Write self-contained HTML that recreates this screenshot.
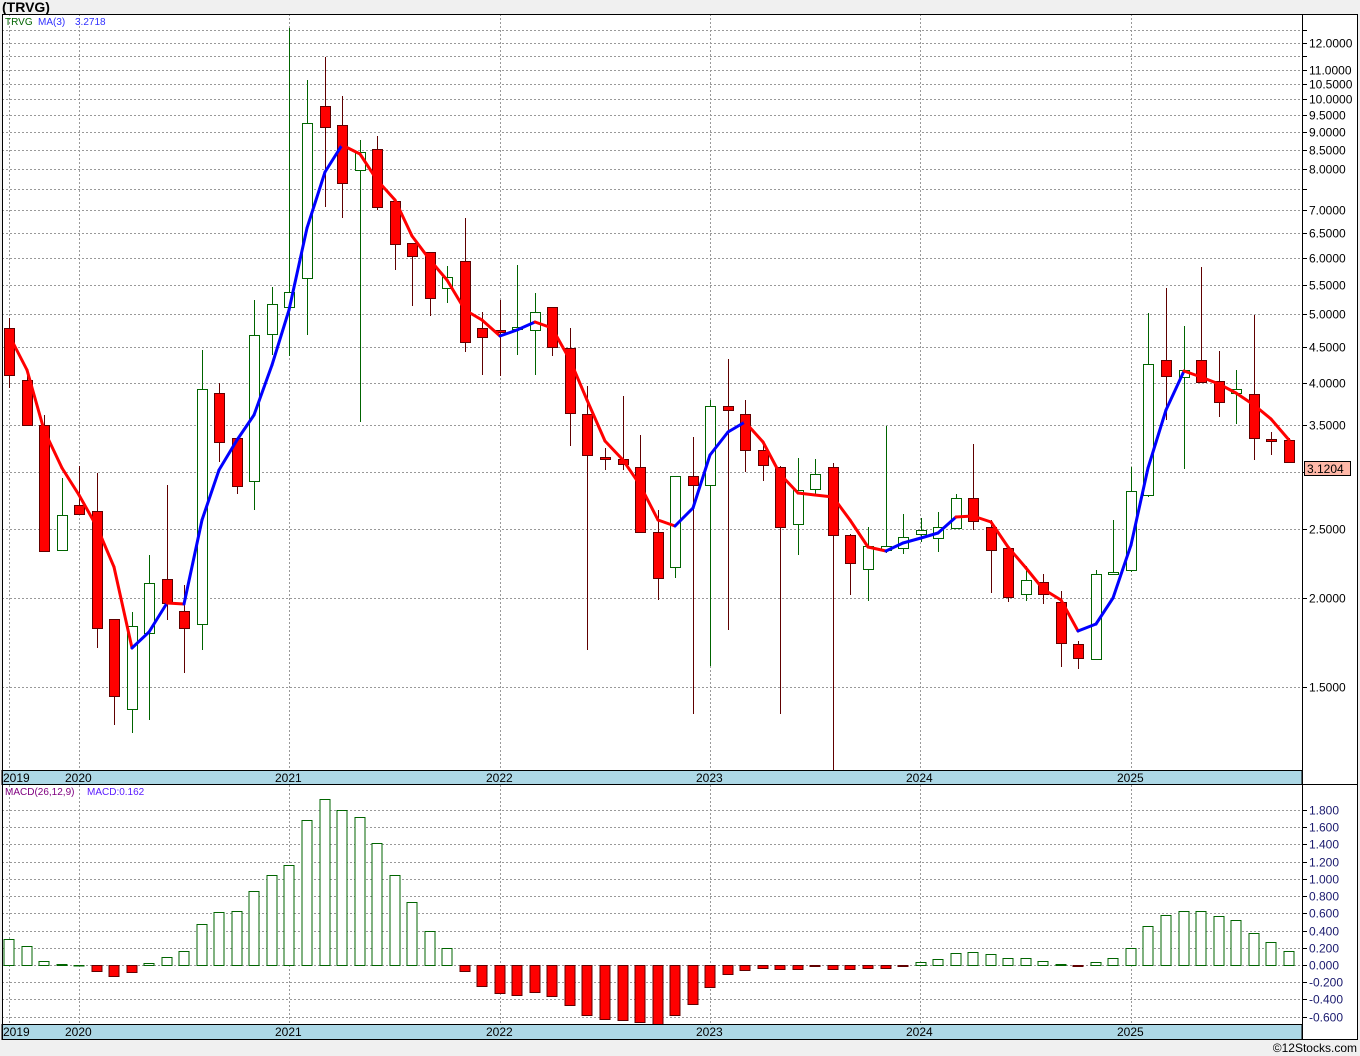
<!DOCTYPE html>
<html><head><meta charset="utf-8"><style>
html,body{margin:0;padding:0;background:#f0f0f0;}
body{width:1360px;height:1056px;overflow:hidden;position:relative;font-family:"Liberation Sans",sans-serif;}
svg{position:absolute;left:0;top:0}
</style></head><body>
<svg id="s" width="1360" height="1056" xmlns="http://www.w3.org/2000/svg" font-family="Liberation Sans, sans-serif">
<rect x="0" y="0" width="1360" height="1056" fill="#f0f0f0"/>
<text x="2" y="12" font-size="14" font-weight="bold" fill="#000">(TRVG)</text>
<rect x="2" y="14" width="1356" height="1026" fill="#fff"/>
<g id="g"></g>
<text x="5" y="25" font-size="10" fill="#006400">TRVG</text>
<text x="38" y="25" font-size="10" fill="#3030ff">MA(3)</text>
<text x="75" y="25" font-size="10" fill="#3030ff">3.2718</text>
<text x="5" y="795" font-size="10" fill="#800080">MACD(26,12,9)</text>
<text x="87" y="795" font-size="10" fill="#5a1aff">MACD:0.162</text>
<text x="1357" y="1052" font-size="12" text-anchor="end" fill="#000">©12Stocks.com</text>
</svg>
<script>
var g=document.getElementById('g'),h='';
function L(x1,y1,x2,y2,c,w,d){h+='<line x1="'+x1+'" y1="'+y1+'" x2="'+x2+'" y2="'+y2+'" stroke="'+c+'" stroke-width="'+(w||1)+'"'+(d?' stroke-dasharray="2,2"':'')+'/>';}
function R(x,y,w,hh,f,s){h+='<rect x="'+x+'" y="'+y+'" width="'+w+'" height="'+hh+'" fill="'+f+'" stroke="'+s+'" stroke-width="1"/>';}
function T(x,y,t,c,a,fs){h+='<text x="'+x+'" y="'+y+'" font-size="'+(fs||12)+'" fill="'+c+'"'+(a?' text-anchor="'+a+'"':'')+'>'+t+'</text>';}
function py(p){return 43+Math.log(12/p)*309.7;}
for(var p=12.5;p>=1.49;p-=0.5){var y=Math.round(py(p))+0.5;L(2,y,1302,y,'#999',1,1);L(1302,y,1307,y,'#000');
 if([12.5,11.5,7.5,3].indexOf(Math.round(p*10)/10)<0)T(1309,y+4,p.toFixed(4),'#000');}
var yrs=[[9,'2019'],[79,'2020'],[289,'2021'],[500,'2022'],[710,'2023'],[920,'2024'],[1131,'2025']];
yrs.forEach(function(a){L(a[0]+.5,14,a[0]+.5,770,'#999',1,1);L(a[0]+.5,785,a[0]+.5,1024,'#999',1,1);});
function my(v){return 965-v*86.1;}
for(var v=1.8;v>=-0.61;v-=0.2){var y=Math.round(my(v))+0.5;L(2,y,1302,y,'#999',1,1);L(1302,y,1307,y,'#000');
 var t=(Math.abs(v)<0.01?'0.000':v.toFixed(3));T(1309,y+4,t,'#1a1a6e');}
var C=[['r',318,328,375,388],['r',375,380,425,425],['r',415,425,551,552],['g',478,515,550,550],['r',466,505,514,514],['r',473,511,628,648],['r',625,619,696,725],['g',612,626,709,733],['g',555,583,633,720],['r',485,579,603,620],['r',585,611,628,673],['g',350,389,624,650],['r',383,393,442,462],['r',438,438,486,494],['g',300,335,481,510],['g',287,304,334,355],['g',28,292,307,356],['g',80,123,278,335],['r',57,106,127,207],['r',96,125,183,218],['g',140,152,170,422],['r',136,149,207,210],['r',201,201,244,270],['r',243,243,256,306],['r',252,252,298,316],['g',266,277,288,303],['r',218,261,342,352],['r',312,328,337,375],['r',300,330,332,376],['g',265,327,329,355],['g',293,312,330,375],['r',307,307,347,356],['r',328,348,413,446],['r',386,414,455,650],['r',448,457,459,470],['r',396,459,464,470],['r',435,467,532,533],['r',510,532,578,600],['g',476,476,567,578],['r',437,476,485,714],['g',400,406,485,666],['r',359,406,410,630],['r',400,414,450,472],['r',445,450,465,481],['r',466,467,527,714],['g',458,490,524,555],['g',459,474,489,496],['r',463,467,535,770],['r',534,535,563,595],['g',527,546,569,601],['g',426,546,550,553],['g',514,537,548,554],['g',518,530,534,542],['g',512,527,538,552],['g',494,498,528,528],['r',444,498,521,530],['r',520,527,550,593],['r',547,548,597,602],['g',566,580,594,601],['r',574,582,594,604],['r',591,602,643,667],['r',641,644,658,669],['g',570,574,659,660],['g',520,572,574,575],['g',467,491,570,572],['g',313,364,495,497],['r',288,360,376,420],['g',326,370,377,469],['r',267,360,382,383],['r',351,381,402,417],['g',370,389,393,424],['r',315,394,438,460],['r',432,439,441,455],['r',438,440,462,462]];
function cx(i){return Math.round(9+17.53*i);}
C.forEach(function(c,i){var x=cx(i)+.5,wc=c[0]=='r'?'#600000':'#006400';
 L(x,c[1],x,c[4],wc);
 var bh=Math.max(c[3]-c[2],1);
 if(c[0]=='r')R(x-5,c[2]+.5,10,bh,'#ff0000','#600000');else R(x-5,c[2]+.5,10,bh,'#fff','#006400');});
var M=[335,370,430,468,495,527,567,648,632,603,604,520,470,440,415,365,310,228,172,145,154,180,200,236,260,280,310,320,336,330,322,328,360,400,441,460,485,520,526,508,455,432,422,442,474,493,495,497,520,547,551,543,538,533,517,516,522,547,568,589,600,631,624,598,545,468,410,371,377,384,393,405,419,440];
for(var i=1;i<M.length;i++){var col=M[i]<M[i-1]-1?'#0000ff':'#ff0000';
 h+='<line x1="'+cx(i-1)+'" y1="'+M[i-1]+'" x2="'+cx(i)+'" y2="'+M[i]+'" stroke="'+col+'" stroke-width="3" stroke-linecap="round"/>';}
var B=[939,946,961,964,965,971,976,972,963,957,951,924,912,911,891,875,865,820,799,810,817,843,875,902,931,948,971,986,993,995,992,996,1005,1015,1019,1020,1022,1025,1015,1004,987,974,970,968,969,969,966,969,969,968,968,966,962,959,953,952,954,958,958,961,964,966,962,958,948,926,915,911,911,916,920,933,942,951];
B.forEach(function(b,i){var x=cx(i)-5;
 if(b<=965)R(x,b+.5,10,Math.max(965-b,0.5),'#fff','#006400');else R(x,965.5,10,b-965,'#ff0000','#600000');});
R(2,770.5,1300,14,'#add8e6','#000');R(2,1024.5,1300,15,'#add8e6','#000');
yrs.forEach(function(a,k){var tx=k==0?3:a[0]-14;h+='<text x="'+tx+'" y="782" font-size="12" fill="#000">'+a[1]+'</text><text x="'+tx+'" y="1036" font-size="12" fill="#000">'+a[1]+'</text>';});
h+='<rect x="2.5" y="14.5" width="1355" height="1025" fill="none" stroke="#000"/>';
L(2,784.5,1358,784.5,'#000');L(1302.5,14,1302.5,1040,'#000');
R(1304.5,461.5,46,14,'#ffb8a8','#000');T(1307,473,'3.1204','#000');
g.innerHTML=h;
</script>
</body></html>
